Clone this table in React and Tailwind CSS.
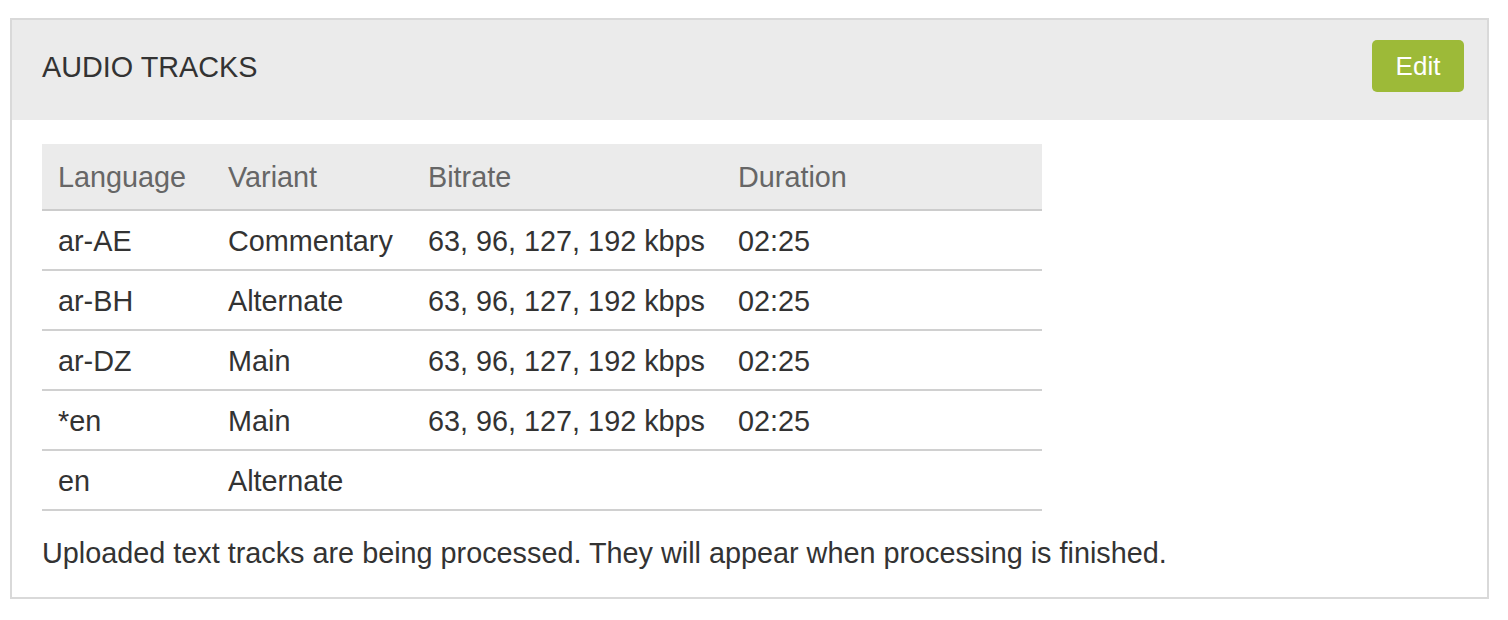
import React from 'react';

const TRACKS = [
  { lang: 'ar-AE', variant: 'Commentary', bitrate: '63, 96, 127, 192 kbps', duration: '02:25' },
  { lang: 'ar-BH', variant: 'Alternate', bitrate: '63, 96, 127, 192 kbps', duration: '02:25' },
  { lang: 'ar-DZ', variant: 'Main', bitrate: '63, 96, 127, 192 kbps', duration: '02:25' },
  { lang: '*en', variant: 'Main', bitrate: '63, 96, 127, 192 kbps', duration: '02:25' },
  { lang: 'en', variant: 'Alternate', bitrate: '', duration: '' },
];

const App = () => {
  return (
    <div className="bg-white min-h-[620px] pt-[18px] pl-[10px]" style={{ fontFamily: '"Liberation Sans", Arial, sans-serif' }}>
      <div className="w-[1479px] border-2 border-[#d9d9d9] bg-white">

        {/* Header */}
        <div className="h-[100px] bg-[#ebebeb] flex items-start justify-between pt-[20px] pl-[30px] pr-[23px]">
          <h2 className="text-[28.8px] text-[#333333] leading-[54px]">AUDIO TRACKS</h2>
          <button className="w-[92px] h-[52px] bg-[#9dba38] text-white text-[26px] rounded-[5px] flex items-center justify-center">
            Edit
          </button>
        </div>

        {/* Body */}
        <div className="pt-[24px] pl-[30px] pb-[24px]">
          <table className="w-[1000px] border-collapse text-[28.8px] table-fixed">
            <colgroup>
              <col className="w-[170px]" />
              <col className="w-[200px]" />
              <col className="w-[310px]" />
              <col className="w-[320px]" />
            </colgroup>
            <thead>
              <tr className="bg-[#ebebeb] h-[66px] border-b-2 border-[#cccccc]">
                <th className="text-left font-normal text-[#666666] pl-4 pt-[3px]">Language</th>
                <th className="text-left font-normal text-[#666666] pl-4 pt-[3px]">Variant</th>
                <th className="text-left font-normal text-[#666666] pl-4 pt-[3px]">Bitrate</th>
                <th className="text-left font-normal text-[#666666] pl-4 pt-[3px]">Duration</th>
              </tr>
            </thead>
            <tbody>
              {TRACKS.map((t, idx) => (
                <tr key={idx} className="h-[60px] border-b-2 border-[#d0d0d0] text-[#333333]">
                  <td className="pl-4 pt-[3px]">{t.lang}</td>
                  <td className="pl-4 pt-[3px]">{t.variant}</td>
                  <td className="pl-4 pt-[3px]">{t.bitrate}</td>
                  <td className="pl-4 pt-[3px]">{t.duration}</td>
                </tr>
              ))}
            </tbody>
          </table>

          <p className="mt-[22px] text-[28.8px] leading-[40px] text-[#333333]">
            Uploaded text tracks are being processed. They will appear when processing is finished.
          </p>
        </div>

      </div>
    </div>
  );
};

export default App;
